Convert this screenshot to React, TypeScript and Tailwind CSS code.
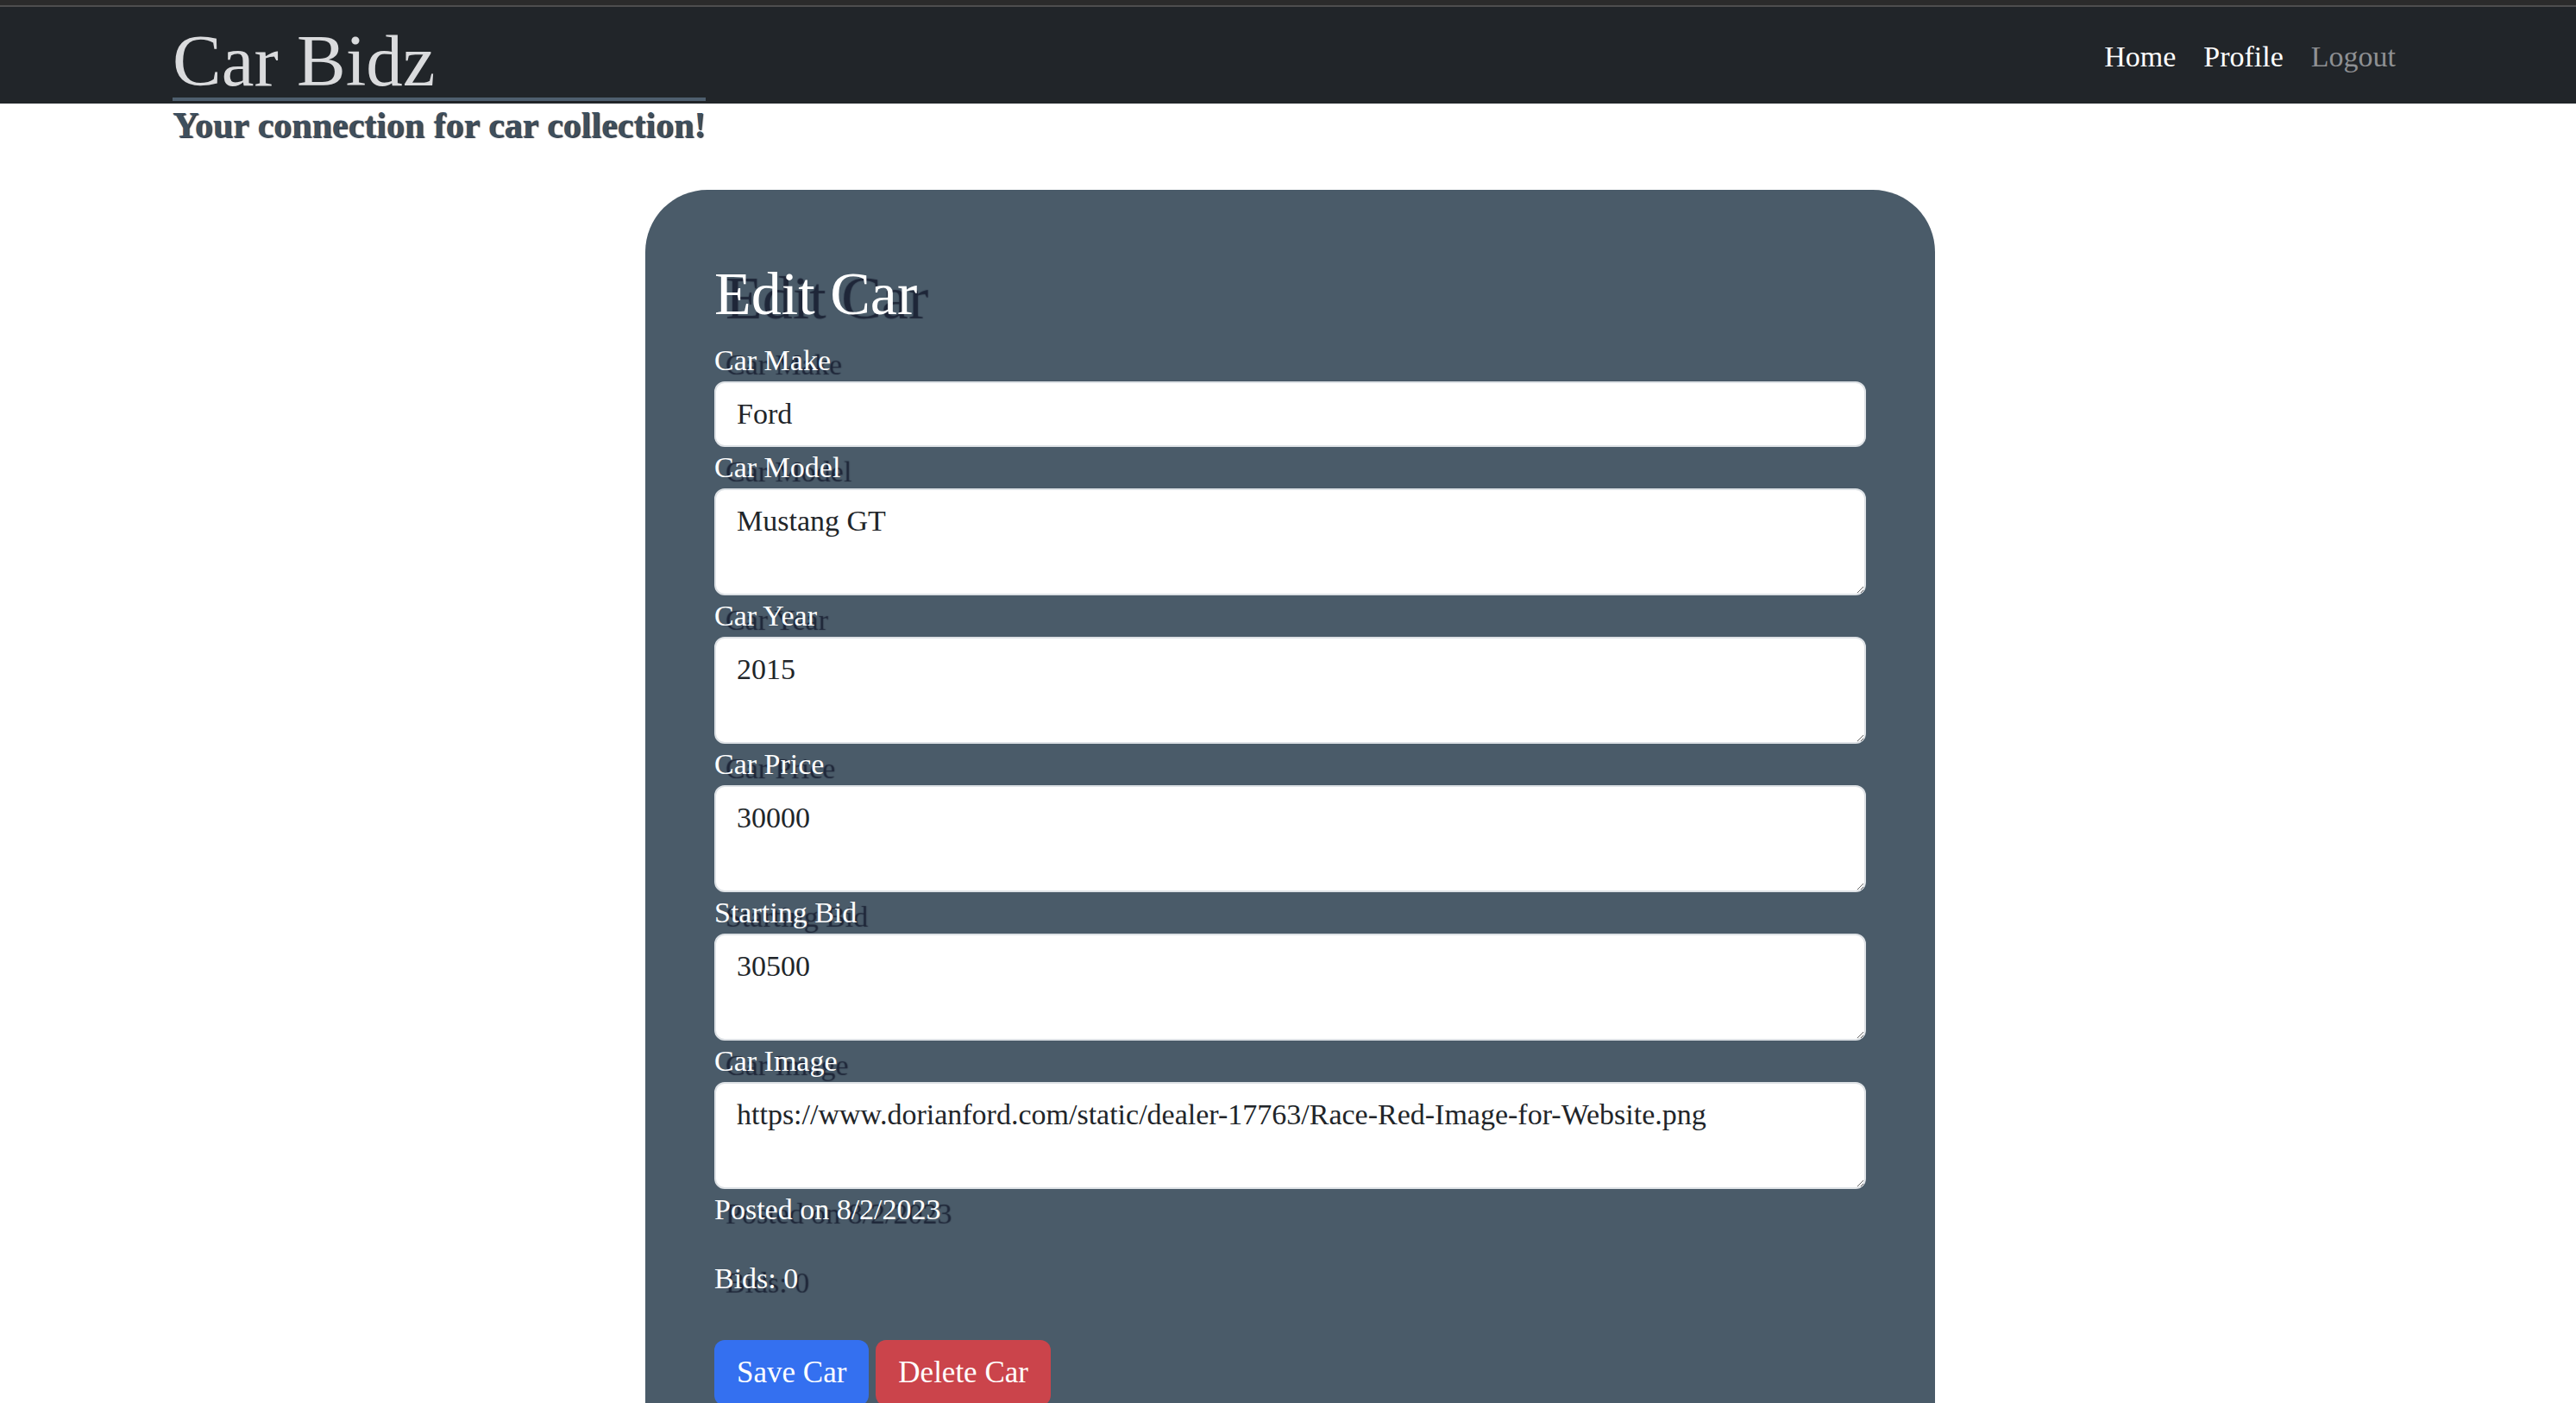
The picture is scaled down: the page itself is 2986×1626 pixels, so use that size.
import React from "react";

function Field({ label, value, multi }: { label: string; value: string; multi?: boolean }) {
  return (
    <div className="flex flex-col">
      <label className="text-[34px] leading-[48px] text-white [text-shadow:13px_5px_1px_#1e2638]">{label}</label>
      {multi ? (
        <textarea
          rows={2}
          defaultValue={value}
          className="block w-full h-[124px] rounded-[12px] border-2 border-[#dee2e6] bg-white px-[24px] py-[12px] text-[34px] leading-[48px] text-[#212529] outline-none"
        />
      ) : (
        <input
          defaultValue={value}
          className="block w-full h-[76px] rounded-[12px] border-2 border-[#dee2e6] bg-white px-[24px] py-[12px] text-[34px] leading-[48px] text-[#212529] outline-none"
        />
      )}
    </div>
  );
}

export default function App() {
  return (
    <div className="min-h-screen w-full overflow-hidden bg-white font-['Liberation_Serif',serif]">
      <div className="h-[6px] bg-[#2b2b2b]" />
      <div className="h-[2px] bg-[#4e4e4e]" />
      <nav className="h-[112px] bg-[#212529] pl-[200px] pr-[193px] pt-[22px] flex items-start justify-between">
        <div className="flex flex-col w-fit">
          <div className="text-[85px] leading-[80px] pb-[3px] border-b-4 border-[#4e5f6e] text-[#dadbdd]">Car Bidz</div>
          <div className="mt-[4px] text-[42px] leading-[48px] font-bold text-[#3e4f5e] whitespace-nowrap [text-shadow:1px_1px_1px_#1f2937]">
            Your connection for car collection!
          </div>
        </div>
        <ul className="flex mt-[12px] text-[34px] leading-[48px]">
          <li className="px-[16px] text-white">Home</li>
          <li className="px-[16px] text-white">Profile</li>
          <li className="px-[16px] text-[#8e9093]">Logout</li>
        </ul>
      </nav>
      <main className="mt-[100px] ml-[748px] w-[1495px] rounded-t-[72px] bg-[#4a5b69] px-[80px] pt-[80px] pb-[80px]">
        <h2 className="text-[70px] leading-[82px] mb-[12px] text-white [text-shadow:13px_5px_1px_#1e2638]">Edit Car</h2>
        <Field label="Car Make" value="Ford" />
        <Field label="Car Model" value="Mustang GT" multi />
        <Field label="Car Year" value="2015" multi />
        <Field label="Car Price" value="30000" multi />
        <Field label="Starting Bid" value="30500" multi />
        <Field label="Car Image" value="https://www.dorianford.com/static/dealer-17763/Race-Red-Image-for-Website.png" multi />
        <p className="text-[34px] leading-[48px] mb-[32px] text-white [text-shadow:13px_5px_1px_#1e2638]">Posted on 8/2/2023</p>
        <p className="text-[34px] leading-[48px] mb-[32px] text-white [text-shadow:13px_5px_1px_#1e2638]">Bids: 0</p>
        <div className="mt-[47px] flex gap-[8px]">
          <button className="rounded-[12px] border-2 border-transparent bg-[#3470f0] px-[24px] py-[12px] text-[35px] leading-[48px] text-white">Save Car</button>
          <button className="rounded-[12px] border-2 border-transparent bg-[#cb444b] px-[24px] py-[12px] text-[35px] leading-[48px] text-white">Delete Car</button>
        </div>
      </main>
    </div>
  );
}
